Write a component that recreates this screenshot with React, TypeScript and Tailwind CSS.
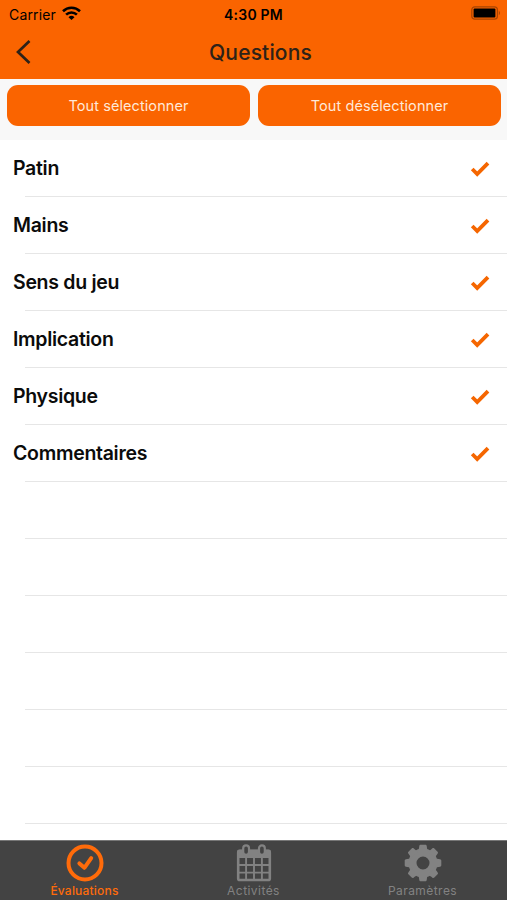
const questions = ["Patin", "Mains", "Sens du jeu", "Implication", "Physique", "Commentaires"];
const EMPTY_ROWS = 6;
const TEETH = [0, 45, 90, 135, 180, 225, 270, 315];

function StatusBar() {
  return (
    <div className="grid h-7 grid-cols-3 items-center text-black">
      <div className="flex items-center gap-1.5 pl-[9px]">
        <span className="pt-px text-[14px] leading-none tracking-[0.15px]">Carrier</span>
        <svg className="-mt-[3px] h-[14px] w-[19px]" viewBox="0 0 19 14" fill="none" stroke="currentColor" strokeWidth="2.6">
          <path d="M1 5.2a12.2 12.2 0 0 1 17 0" />
          <path d="M4.1 8.6a7.8 7.8 0 0 1 10.8 0" />
          <path d="M9.5 14 6.5 11.2a4.3 4.3 0 0 1 6 0z" fill="currentColor" stroke="none" />
        </svg>
      </div>
      <div className="pt-px text-center text-[14px] leading-none font-semibold tracking-[0.2px] whitespace-nowrap">4:30 PM</div>
      <div className="flex justify-end pr-[6px]">
        <svg className="-mt-0.5 h-[14px] w-[30px]" viewBox="0 0 30 14">
          <rect x="0.8" y="0.8" width="25.6" height="12.4" rx="3" fill="none" stroke="#a84402" strokeWidth="1.2" />
          <rect x="2.6" y="2.6" width="21.8" height="8.8" rx="1" fill="#000" />
          <path d="M27.8 4.8c1.6.7 1.6 3.7 0 4.4z" fill="#a84402" />
        </svg>
      </div>
    </div>
  );
}

function CheckMark() {
  return (
    <svg className="mt-0.5 h-[18px] w-5" viewBox="0 0 20 18" fill="none" stroke="#f56600" strokeWidth="3.8">
      <path d="M2.2 9 7.2 14 18 3.2" />
    </svg>
  );
}

function CheckCircleIcon() {
  return (
    <svg className="size-[38px]" viewBox="0 0 38 38" fill="none" stroke="currentColor" strokeWidth="4">
      <circle cx="19" cy="19" r="16.5" />
      <path d="m13.4 19.4 5 4.4 6.8-9.6" strokeLinecap="round" strokeLinejoin="round" />
    </svg>
  );
}

function CalendarIcon() {
  return (
    <svg className="size-[38px]" viewBox="0 0 38 38" fill="none" stroke="currentColor">
      <path d="M4.2 5.5h29.6a2.2 2.2 0 0 1 2.2 2.2v6.2H2V7.700a2.200 2.200 0 0 1 2.200-2.200z" fill="currentColor" stroke="none" />
      <rect x="3.2" y="7" width="31.6" height="29" rx="1.6" strokeWidth="2.6" />
      <path d="M11.1 13v23M19 13v23M26.9 13v23M3 21h32M3 28.600h32" strokeWidth="1.9" />
      <rect x="8.200" y="1.400" width="5.800" height="9.400" rx="2.900" fill="#434343" strokeWidth="2.200" />
      <rect x="24" y="1.400" width="5.800" height="9.400" rx="2.900" fill="#434343" strokeWidth="2.200" />
    </svg>
  );
}

function GearIcon() {
  return (
    <svg className="size-[38px]" viewBox="0 0 38 38" fill="none" stroke="currentColor">
      <circle cx="19" cy="19" r="10.5" strokeWidth="8" />
      {TEETH.map((angle) => (
        <path
          key={angle}
          d="M12.6 7.500c2-.7 2.200-1.800 2.500-4.200l.2-1.300c.1-.8.6-1.300 1.400-1.300h4.600c.8 0 1.300.5 1.400 1.300l.2 1.300c.3 2.400.5 3.500 2.500 4.200z"
          transform={`rotate(${angle} 19 19)`}
          fill="currentColor"
          stroke="none"
        />
      ))}
    </svg>
  );
}

const tabs = [
  { label: "Évaluations", Icon: CheckCircleIcon, color: "text-[#ff6b0a]", labelClass: "tracking-[0.2px] font-medium" },
  { label: "Activités", Icon: CalendarIcon, color: "text-[#828282]", labelClass: "tracking-[0.45px]" },
  { label: "Paramètres", Icon: GearIcon, color: "text-[#828282]", labelClass: "tracking-[0.45px]" },
];

export default function App() {
  return (
    <div className="flex h-[900px] w-[507px] flex-col overflow-hidden bg-white font-['Inter','Liberation_Sans',sans-serif]">
      <header className="h-[79px] shrink-0 bg-[#fa6400]">
        <StatusBar />
        <div className="grid h-12 grid-cols-[60px_1fr_46px] items-center">
          <button className="pl-[15px] text-[#2e2218]" aria-label="Retour">
            <svg className="h-[26px] w-4" viewBox="0 0 16 26" fill="none" stroke="currentColor" strokeWidth="2.7">
              <path d="M14.5 2 3 13l11.5 11" />
            </svg>
          </button>
          <h1 className="text-center text-[21px] leading-none font-medium tracking-[0.15px] text-[#2e2218]">Questions</h1>
        </div>
      </header>

      <div className="grid h-[61px] shrink-0 grid-cols-2 gap-2 bg-[#f8f8f8] pt-1.5 pr-1.5 pl-[7px]">
        <button className="h-[41px] rounded-[11px] bg-[#fa6400] text-[14.5px] tracking-[0.08px] text-[#ffe9d9]">Tout sélectionner</button>
        <button className="h-[41px] rounded-[11px] bg-[#fa6400] text-[14.5px] tracking-[0.08px] text-[#ffe9d9]">Tout désélectionner</button>
      </div>

      <ul className="flex-1 overflow-hidden">
        {questions.map((question) => (
          <li key={question}>
            <div className="flex h-14 items-center justify-between pr-[17px] pl-[13px]">
              <span className="pt-0.5 text-[19.5px] leading-none font-semibold tracking-[-0.3px] text-[#0b0b0b]">{question}</span>
              <CheckMark />
            </div>
            <div className="ml-[25px] h-px bg-[#e6e6e6]" />
          </li>
        ))}
        {Array.from({ length: EMPTY_ROWS }, (_, i) => (
          <li key={i} className="flex h-[57px] items-end pl-[25px]">
            <div className="h-px w-full bg-[#e6e6e6]" />
          </li>
        ))}
      </ul>

      <nav className="grid h-[60px] shrink-0 grid-cols-3 border-t border-[#777] bg-[#434343]">
        {tabs.map(({ label, Icon, color, labelClass }) => (
          <div key={label} className={`flex flex-col items-center pt-[3px] ${color}`}>
            <Icon />
            <span className={`mt-[3px] text-[12px] leading-none ${labelClass}`}>{label}</span>
          </div>
        ))}
      </nav>
    </div>
  );
}
